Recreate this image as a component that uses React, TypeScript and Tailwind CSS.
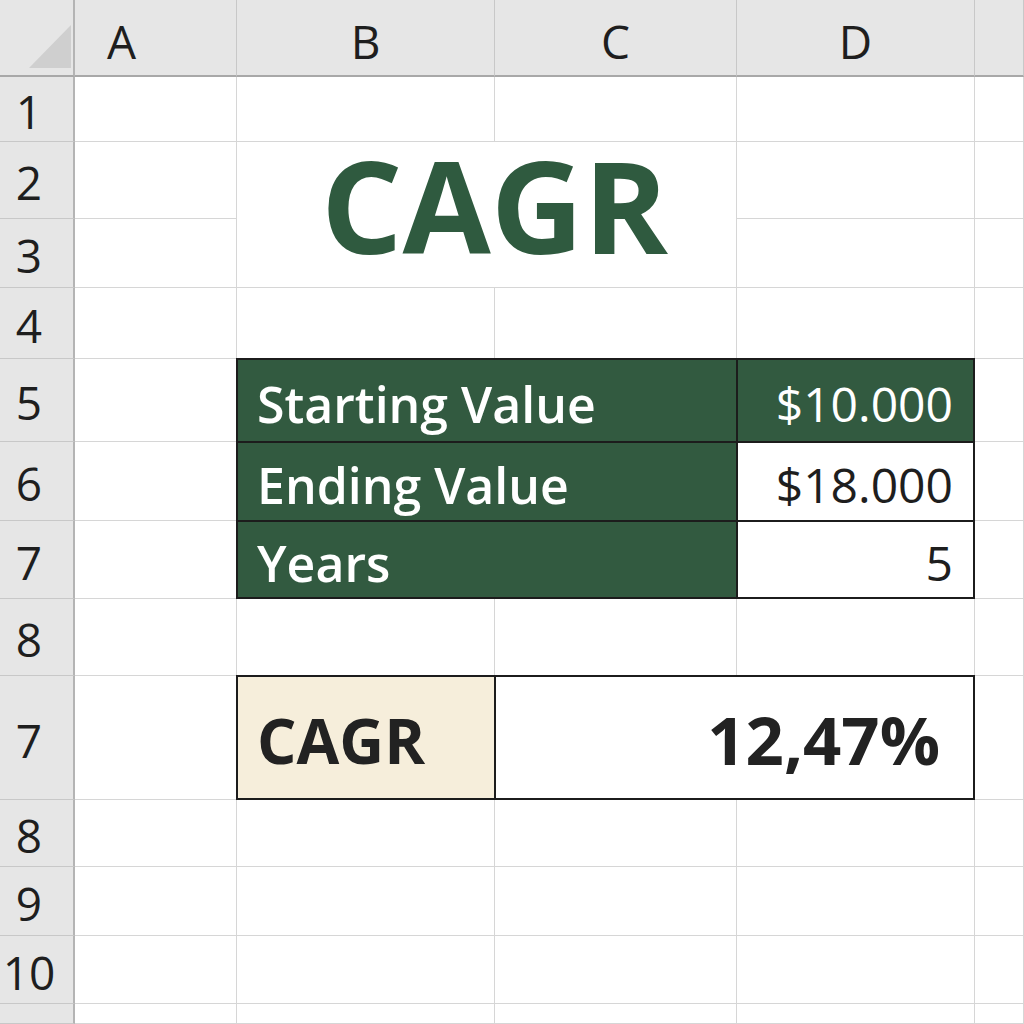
import React from "react";

const COLS = ["col-start-1", "col-start-2", "col-start-3", "col-start-4", "col-start-5", "col-start-6"];
const ROWS = [
  "row-start-1", "row-start-2", "row-start-3", "row-start-4", "row-start-5", "row-start-6", "row-start-7",
  "row-start-8", "row-start-9", "row-start-10", "row-start-11", "row-start-12", "row-start-13", "row-start-14",
];

const rowLabels = ["1", "2", "3", "4", "5", "6", "7", "8", "7", "8", "9", "10", ""];
const colLabels = ["A", "B", "C", "D", ""];

function covered(r: number, c: number) {
  if ((r === 1 || r === 2) && (c === 1 || c === 2)) return true;
  if (r >= 4 && r <= 6 && c >= 1 && c <= 3) return true;
  if (r === 8 && c >= 1 && c <= 3) return true;
  return false;
}

export default function App() {
  const cells: React.ReactNode[] = [];
  for (let r = 0; r < 13; r++) {
    for (let c = 0; c < 5; c++) {
      if (covered(r, c)) continue;
      cells.push(
        <div
          key={`c-${r}-${c}`}
          className={`${ROWS[r + 1]} ${COLS[c + 1]} bg-white border-r border-b border-[#d6d6d6]`}
        />
      );
    }
  }

  return (
    <div className="w-[1024px] h-[1024px] overflow-hidden bg-white font-['Open_Sans',sans-serif] text-[#1e1e1e]">
      <div className="grid grid-cols-[75px_162px_258px_242px_238px_49px] grid-rows-[77px_65px_77px_69px_71px_83px_79px_78px_77px_124px_67px_69px_68px_20px]">
        {/* corner */}
        <div className="row-start-1 col-start-1 bg-[#e6e6e6] border-r-2 border-r-[#b4b4b4] border-b-2 border-b-[#a8a8a8] flex items-end justify-end">
          <svg width="44" height="44" viewBox="0 0 44 44" className="mb-[7px]">
            <polygon points="0,44 42,44 42,1" fill="#cfcfcf" />
          </svg>
        </div>

        {/* column headers */}
        {colLabels.map((l, i) => (
          <div
            key={`h-${i}`}
            className={`row-start-1 ${COLS[i + 1]} bg-[#e6e6e6] border-r border-r-[#c8c8c8] border-b-2 border-b-[#a8a8a8] flex items-center ${
              i === 0 ? "justify-start pl-[32px]" : "justify-center"
            } text-[46px] leading-none pt-[6px]`}
          >
            {l}
          </div>
        ))}

        {/* row headers */}
        {rowLabels.map((l, i) => (
          <div
            key={`r-${i}`}
            className={`${ROWS[i + 1]} col-start-1 bg-[#e6e6e6] border-b border-b-[#c8c8c8] border-r-2 border-r-[#b4b4b4] flex items-center justify-center pr-[15px] text-[46px] leading-none pt-[4px]`}
          >
            {l}
          </div>
        ))}

        {cells}

        {/* Title */}
        <div className="row-start-3 row-span-2 col-start-3 col-span-2 bg-white border-r border-b border-[#d6d6d6] flex items-center justify-center pl-[16px] pb-[20px]">
          <span className="text-[128px] leading-none font-bold text-[#2f5a3f]">CAGR</span>
        </div>

        {/* Input table */}
        <div className="row-start-6 row-span-3 col-start-3 col-span-3 -mt-px -ml-px border-2 border-[#1c1c1c] grid grid-cols-[500px_1fr] grid-rows-[83px_79px_1fr]">
          <div className="bg-[#325a40] border-r-2 border-b-2 border-[#1c1c1c] flex items-center pl-[19px] pt-[6px] text-white font-semibold text-[50px] leading-none">
            Starting Value
          </div>
          <div className="bg-[#325a40] border-b-2 border-[#1c1c1c] flex items-center justify-end pr-[20px] pt-[6px] text-white font-medium text-[48px] leading-none">
            $10.000
          </div>
          <div className="bg-[#325a40] border-r-2 border-b-2 border-[#1c1c1c] flex items-center pl-[19px] pt-[6px] text-white font-semibold text-[50px] leading-none">
            Ending Value
          </div>
          <div className="bg-white border-b-2 border-[#1c1c1c] flex items-center justify-end pr-[20px] pt-[6px] text-[48px] leading-none">
            $18.000
          </div>
          <div className="bg-[#325a40] border-r-2 border-[#1c1c1c] flex items-center pl-[19px] pt-[6px] text-white font-semibold text-[50px] leading-none">
            Years
          </div>
          <div className="bg-white flex items-center justify-end pr-[20px] pt-[6px] text-[48px] leading-none">
            5
          </div>
        </div>

        {/* Result */}
        <div className="row-start-10 col-start-3 col-span-3 -mt-px -ml-px border-2 border-[#1c1c1c] grid grid-cols-[258px_1fr]">
          <div className="bg-[#f6eedb] border-r-2 border-[#1c1c1c] flex items-center pl-[19px] pt-[4px] font-bold text-[62px] leading-none text-[#222]">
            CAGR
          </div>
          <div className="bg-white flex items-center justify-end pr-[33px] pt-[4px] font-bold text-[67px] leading-none text-[#222]">
            12,47%
          </div>
        </div>
      </div>
    </div>
  );
}
